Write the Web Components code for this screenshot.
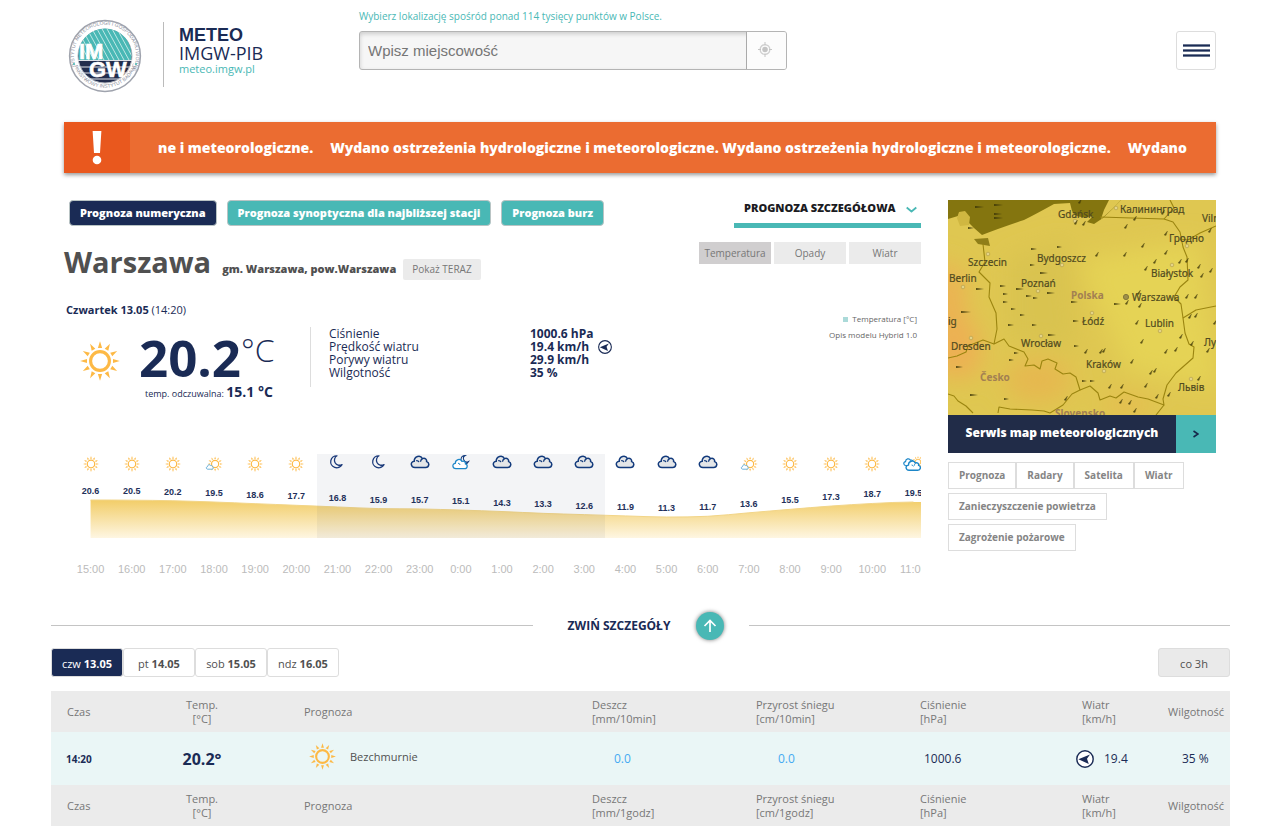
<!DOCTYPE html>
<html lang="pl">
<head>
<meta charset="utf-8">
<title>METEO IMGW-PIB</title>
<style>
  body {
    margin: 0;
    background: #fff;
    color: #1a2b55;
    font-family: "Open Sans", "Noto Sans", sans-serif;
    font-size: 12px;
    --navy: #1a2b55;
    --teal: #49b8b5;
    --grey: #ebebeb;
    --line: #ddd;
  }
  .wrap { padding: 0 67px 0 64px; }
  .columns {
    display: grid;
    grid-template-columns: minmax(0, 1fr) 268px;
    column-gap: 27px;
    padding-top: 27px;
  }
</style>
</head>
<body>
  <div class="wrap">
    <meteo-header></meteo-header>
    <meteo-alert>
      <span>ne i meteorologiczne.</span>
      <span>Wydano ostrzeżenia hydrologiczne i meteorologiczne. Wydano ostrzeżenia hydrologiczne i meteorologiczne.</span>
      <span>Wydano</span>
    </meteo-alert>
    <div class="columns">
      <main>
        <meteo-place>
          <span slot="name">Warszawa</span>
          <span slot="area">gm. Warszawa, pow.Warszawa</span>
        </meteo-place>
        <meteo-chart></meteo-chart>
      </main>
      <meteo-maps>Serwis map meteorologicznych</meteo-maps>
    </div>
  </div>
  <meteo-details></meteo-details>

<script>
(function() {
    function define(name, html, setup) {
        const tmpl = document.createElement("template");
        tmpl.innerHTML = html;
        customElements.define(name, class extends HTMLElement {
            constructor() {
                super();
                this.attachShadow({mode: "open"});
                this.shadowRoot.appendChild(tmpl.content.cloneNode(true));
            }
            connectedCallback() {
                if (setup) setup(this, this.shadowRoot);
            }
        });
    }

    // ---- icons ----
    function rays(cx, cy, r1, r2, w) {
        let out = "";
        for (let a = 0; a < 360; a += 30) {
            out += `<path d="M${cx - w} ${cy - r1}L${cx} ${cy - r2}L${cx + w} ${cy - r1}Z" transform="rotate(${a} ${cx} ${cy})"/>`;
        }
        return out;
    }
    const SUN = `<circle cx="20" cy="20" r="9.4" fill="none" stroke="#fdb945" stroke-width="3.1"/><g fill="#fdb945">${rays(20, 20, 13, 19.8, 2.1)}</g>`;
    const CLOUD = "M5 12.5C.5 12.5 0 6.6 4.2 6.2C4.2 1.2 10.4-.4 12.4 3.6C15.4 2.6 17 4.8 16.6 6.6C20 7.6 19.2 12.5 15.6 12.5Z";
    const MOON = "M7 .8A6 6 0 1 0 12 9.6A5 5 0 0 1 7 .8Z";
    const ICONS = {
        "sun": ["0 0 40 40", SUN],
        "moon": ["-3 -1 20 20", `<path d="${MOON}" fill="none" stroke="#1b3a7a" stroke-width="1.3" stroke-linejoin="round"/>`],
        "cloud": ["0 -1 20 20", `<path d="${CLOUD}" fill="#e4e6e8" stroke="#123a7c" stroke-width="1.5"/><path d="M6.2 5.6Q8.4 5.4 8.9 7.2M12.4 3.8Q10.6 4.6 10.5 6.8" fill="none" stroke="#123a7c" stroke-width="1.3"/>`],
        "cloud-moon": ["0 0 20 20", `<path d="${MOON}" transform="translate(9.5 1) scale(.68)" fill="none" stroke="#123a7c" stroke-width="1.5"/><path d="${CLOUD}" transform="translate(.8 4.4) scale(.82)" fill="#fff" stroke="#1c86c8" stroke-width="1.5"/><path d="M7 9.2Q9 9.4 9 11" fill="none" stroke="#1c86c8"/>`],
        "sun-cloud": ["0 0 20 20", `<g transform="translate(3.5 2.4) scale(.38)">${SUN}</g><path d="${CLOUD}" transform="translate(1.8 10.2) scale(.4)" fill="#fff" stroke="#4a9fd0" stroke-width="2"/>`],
        "clouds-sun": ["0 0 20 20", `<g transform="translate(9 2) scale(.3)">${SUN}</g><path d="${CLOUD}" transform="translate(0 4) scale(.6)" fill="#fff" stroke="#1c86c8" stroke-width="2"/><path d="${CLOUD}" transform="translate(2 6) scale(.82)" fill="#fff" stroke="#1c86c8" stroke-width="1.7"/><path d="M8.6 11Q10 11 10.4 12.4M12.6 9.4Q11.4 10 11.4 11.6" fill="none" stroke="#1c86c8"/>`],
        "wind": ["0 0 18 18", `<circle cx="9" cy="9" r="8.2" fill="#fff" stroke="#1a2b55" stroke-width="1.4"/><path d="M2.4 9.2L14 4.6L11 8.8L12.8 14Z" fill="#1a2b55"/>`],
        "locate": ["0 0 14 15", `<circle cx="7" cy="7.5" r="4.8" fill="none" stroke="#d0d0d0" stroke-width="1.4"/><circle cx="7" cy="7.5" r="2.8" fill="#c4c4c4"/><path d="M7 0V3M7 12V15M0 7.5H3M11 7.5H14" stroke="#c4c4c4"/>`],
        "up": ["0 0 14 14", `<path d="M7 13V2M1.5 7L7 1.5L12.5 7" fill="none" stroke="#fff" stroke-width="1.7"/>`],
        "bars": ["0 0 27 13", `<path d="M0 1.5H27M0 6.5H27M0 11.5H27" stroke="#6c7891" stroke-width="3"/><path d="M0 1.5H27M0 6.5H27M0 11.5H27" stroke="#1a2b55" stroke-width="1"/>`],
        "next": ["0 0 6 8", `<path d="M.5 1L5 4L.5 7" fill="none" stroke="#16284a" stroke-width="1.6"/>`]
    };

    define("meteo-icon", `
    <style>
      :host { display: inline-block; flex: none; width: 20px; height: 20px; }
      svg { display: block; width: 100%; height: 100%; }
    </style>
    <svg aria-hidden="true"></svg>
    `, function(el, root) {
        const icon = ICONS[el.getAttribute("name")];
        const svg = root.querySelector("svg");
        svg.setAttribute("viewBox", icon[0]);
        svg.innerHTML = icon[1];
    });

    // ---- header ----
    define("meteo-logo", `
    <style>
      :host { display: block; width: 74px; height: 74px; }
      svg { display: block; }
      text { font-family: "Liberation Sans", Arial, sans-serif; }
    </style>
    <svg viewBox="0 0 74 74" width="74" height="74" role="img" aria-label="IMGW">
      <defs>
        <clipPath id="top"><path d="M11 41A26.500 26.500 0 1 1 63 41Z"/></clipPath>
        <path id="over" d="M9 50A31 31 0 1 1 65 50"/>
        <path id="under" d="M6 46A32.500 32.500 0 0 0 68 46"/>
      </defs>
      <circle cx="37" cy="37" r="35.400" fill="#fff" stroke="#9fa3ad" stroke-width="1.500"/>
      <circle cx="37" cy="37" r="27" fill="#222d4d" stroke="#b4b8c0"/>
      <path d="M11 41A26.500 26.500 0 1 1 63 41Z" fill="#49b8b5"/>
      <g clip-path="url(#top)" stroke="#bfe7e5" stroke-width="1">
        <path d="M8 8L32 52M13 8L37 52M18 8L42 52M23 8L47 52M28 8L52 52M33 8L57 52M38 8L62 52M43 8L67 52M48 8L72 52M53 8L77 52M3 8L27 52"/>
      </g>
      <path d="M10 41.500H64M12 48H62M14 54H60M21 60H53" stroke="#dfe2e8"/>
      <text x="11" y="40" font-size="22" font-weight="bold" fill="#fff" stroke="#fff" stroke-width=".5">IM</text>
      <text x="21" y="58" font-size="22" font-weight="bold" fill="#fff" stroke="#fff" stroke-width=".5">GW</text>
      <text font-size="5" fill="#8a8e9b"><textPath href="#over" startOffset="3">INSTYTUT METEOROLOGII I GOSPODARKI WODNEJ</textPath></text>
      <text font-size="5" fill="#8a8e9b"><textPath href="#under" startOffset="1">PAŃSTWOWY INSTYTUT BADAWCZY</textPath></text>
      <circle cx="6" cy="45" r="1" fill="#49b8b5"/><circle cx="68" cy="45" r="1" fill="#49b8b5"/>
    </svg>
    `);

    define("meteo-header", `
    <style>
      :host { display: flex; align-items: flex-start; height: 122px; }
      .brand { display: flex; width: 295px; padding: 19px 0 0 4px; box-sizing: border-box; color: inherit; text-decoration: none; }
      .names { margin: 3px 0 0 21px; padding: 4px 0 0 15px; height: 61px; border-left: 1px solid #bbb; font-size: 18px; line-height: 18px; }
      .names b { display: block; font-family: "Liberation Sans", Arial, sans-serif; }
      .names small { display: block; font-size: 11px; line-height: 14px; color: var(--teal); }
      .search { width: 428px; padding-top: 8px; }
      label { display: block; line-height: 16px; margin-bottom: 7px; font-size: 10px; color: var(--teal); white-space: nowrap; }
      .box { display: flex; height: 39px; box-sizing: border-box; border: 1px solid #b4b4b4; border-radius: 3px; box-shadow: inset 0 2px 4px #ccc; background: #f6f6f6; overflow: hidden; }
      input { flex: 1; min-width: 0; border: 0; padding: 0 8px; background: none; font: 15px "Liberation Sans", Arial, sans-serif; color: #666; outline: 0; }
      input::placeholder { color: #757575; }
      .box button { width: 40px; border: 0; border-left: 1px solid #aaa; background: #fcfcfc; padding: 0 4px 0 0; }
      .box meteo-icon { width: 14px; height: 15px; }
      .menu { margin: 31px 0 0 auto; width: 40px; height: 39px; padding: 0; display: grid; place-items: center; border: 1px solid #ddd; border-radius: 3px; background: #fff; }
      .menu meteo-icon { width: 27px; height: 13px; }
    </style>
    <a class="brand" href="#">
      <meteo-logo></meteo-logo>
      <span class="names"><b>METEO</b>IMGW-PIB<small>meteo.imgw.pl</small></span>
    </a>
    <form class="search">
      <label for="city">Wybierz lokalizację spośród ponad 114 tysięcy punktów w Polsce.</label>
      <div class="box">
        <input id="city" type="text" placeholder="Wpisz miejscowość">
        <button type="button" aria-label="Moja lokalizacja"><meteo-icon name="locate"></meteo-icon></button>
      </div>
    </form>
    <button class="menu" aria-label="Menu"><meteo-icon name="bars"></meteo-icon></button>
    `);

    define("meteo-alert", `
    <style>
      :host { display: flex; height: 51px; background: #eb6c31; color: #fff; box-shadow: 0 2px 4px #999; }
      .mark { width: 66px; display: grid; place-items: center; background: #e9581e; }
      .text { flex: 1; min-width: 0; display: flex; align-items: center; gap: 17px; margin: 0 20px 0 28px; overflow: hidden; white-space: nowrap; font-size: 14px; font-weight: 800; }
    </style>
    <div class="mark">
      <svg width="10" height="34" viewBox="0 0 10 34" fill="#fff"><path d="M.6 0H9.400L8 22H2Z"/><circle cx="5" cy="29" r="4.300"/></svg>
    </div>
    <div class="text"><slot></slot></div>
    `);

    // ---- current conditions ----
    define("meteo-place", `
    <style>
      :host { display: block; }
      button { font-family: inherit; border: 0; }
      .row { display: flex; justify-content: space-between; align-items: flex-start; }
      .kinds { display: flex; gap: 10px; padding-left: 5px; }
      .kinds button { height: 26px; padding: 0 10px 2px; border: 1px solid #b9c4c4; border-radius: 4px; background: var(--teal); color: #fff; font-size: 11px; font-weight: 800; white-space: nowrap; }
      .kinds .on { background: var(--navy); }
      .picker { position: relative; width: 187px; }
      select { appearance: none; display: block; width: 100%; height: 28px; padding: 0 0 9px 10px; border: 0; border-bottom: 5px solid var(--teal); border-radius: 0; background: none; color: #1b1b22; font: 800 11px "Open Sans", sans-serif; }
      .picker svg { position: absolute; right: 4px; top: 6px; }
      .place { display: flex; align-items: baseline; padding-top: 16px; color: #505050; font-size: 11px; font-weight: 800; }
      h1 { margin: 0 11px 0 0; font-size: 29px; line-height: 40px; font-weight: 700; }
      .place button { height: 21px; margin-left: 7px; padding: 0 9px; border-radius: 2px; background: var(--grey); color: #777; font-size: 10px; }
      .layers { display: flex; justify-content: flex-end; gap: 3px; margin-top: 14px; }
      .layers button { width: 72px; height: 22px; padding: 0; background: var(--grey); color: #777; font-size: 10px; }
      .layers .on { background: #d0cecf; }
      .side { display: flex; flex-direction: column; align-items: flex-end; }
      .now { margin-top: 20px; }
      .date { padding-left: 2px; line-height: 16px; font-size: 11px; }
      .state { display: flex; margin-top: 9px; }
      .state > meteo-icon { width: 40px; height: 40px; margin: 14px 0 0 16px; }
      .temp { width: 191px; box-sizing: border-box; padding-left: 19px; height: 60px; border-right: 1px solid var(--line); }
      .big { display: flex; align-items: flex-start; font-size: 51px; line-height: 60px; font-weight: 700; white-space: nowrap; }
      .big span { font-size: 32px; line-height: 46px; font-weight: 300; }
      .feels { padding-left: 6px; font-size: 9px; line-height: 10px; white-space: nowrap; }
      .feels b { font-size: 14px; }
      dl { display: grid; grid-template-columns: 201px auto; margin: 0 0 0 18px; line-height: 13px; font-size: 12px; align-content: start; }
      dt, dd { margin: 0; }
      dd { display: flex; height: 13px; align-items: center; font-weight: 700; }
      dd meteo-icon { width: 14px; height: 14px; margin-left: 9px; }
      .legend { margin: 29px 4px 0 0; text-align: right; line-height: 16px; font-size: 8px; color: #666; }
      .legend i { display: inline-block; width: 5px; height: 5px; margin-right: 4px; background: #abdad9; }
    </style>
    <div class="row">
      <div>
        <div class="kinds">
          <button class="on">Prognoza numeryczna</button>
          <button>Prognoza synoptyczna dla najbliższej stacji</button>
          <button>Prognoza burz</button>
        </div>
        <div class="place">
          <h1><slot name="name"></slot></h1>
          <slot name="area"></slot>
          <button>Pokaż TERAZ</button>
        </div>
      </div>
      <div class="side">
        <div class="picker">
          <select aria-label="Rodzaj prognozy"><option>PROGNOZA SZCZEGÓŁOWA</option></select>
          <svg width="11" height="7" viewBox="0 0 11 7"><path d="M.7 1.500L5.500 5.500L10.300 1.500" fill="none" stroke="#49b8b5" stroke-width="1.800" stroke-linejoin="round"/></svg>
        </div>
        <div class="layers">
          <button class="on">Temperatura</button>
          <button>Opady</button>
          <button>Wiatr</button>
        </div>
      </div>
    </div>
    <div class="row">
      <div class="now">
        <div class="date"><b>Czwartek 13.05</b> (14:20)</div>
        <div class="state">
          <meteo-icon name="sun"></meteo-icon>
          <div class="temp">
            <div class="big">20.2<span>°C</span></div>
            <div class="feels">temp. odczuwalna: <b>15.1 °C</b></div>
          </div>
          <dl>
            <dt>Ciśnienie</dt><dd>1000.6 hPa</dd>
            <dt>Prędkość wiatru</dt><dd>19.4 km/h <meteo-icon name="wind"></meteo-icon></dd>
            <dt>Porywy wiatru</dt><dd>29.9 km/h</dd>
            <dt>Wilgotność</dt><dd>35 %</dd>
          </dl>
        </div>
      </div>
      <div class="legend"><i></i>Temperatura [°C]<br>Opis modelu Hybrid 1.0</div>
    </div>
    `);

    // ---- hourly chart ----
    const HOURS = [
        ["15:00", 20.6, "sun"], ["16:00", 20.5, "sun"], ["17:00", 20.2, "sun"], ["18:00", 19.5, "sun-cloud"],
        ["19:00", 18.6, "sun"], ["20:00", 17.7, "sun"], ["21:00", 16.8, "moon"], ["22:00", 15.9, "moon"],
        ["23:00", 15.7, "cloud"], ["0:00", 15.1, "cloud-moon"], ["1:00", 14.3, "cloud"], ["2:00", 13.3, "cloud"],
        ["3:00", 12.6, "cloud"], ["4:00", 11.9, "cloud"], ["5:00", 11.3, "cloud"], ["6:00", 11.7, "cloud"],
        ["7:00", 13.6, "sun-cloud"], ["8:00", 15.5, "sun"], ["9:00", 17.3, "sun"], ["10:00", 18.7, "sun"],
        ["11:00", 19.5, "clouds-sun"]
    ];
    const drop = t => (20.6 - t) * 1.83;

    define("meteo-chart", `
    <style>
      :host { display: block; overflow: hidden; padding-left: 6px; margin-top: 67px; }
      .strip { display: grid; grid-template-columns: repeat(21, minmax(0, 1fr)); margin-right: -13px; }
      svg { grid-area: 1 / 1 / 2 / 22; width: 100%; height: 84px; }
      .hour { grid-row: 1; z-index: 1; height: 84px; text-align: center; font: bold 9px/12px "Liberation Sans", Arial, sans-serif; color: #23305a; }
      .night { background: rgba(26, 43, 85, .05); }
      meteo-icon { display: block; margin: 0 auto 11px; }
      meteo-icon[name="sun"] { width: 16px; border: 2px solid transparent; height: 16px; }
      .time { grid-row: 2; margin-top: 24px; justify-self: center; font: 11px/14px "Liberation Sans", Arial, sans-serif; color: #bbb; }
    </style>
    <div class="strip">
      <svg viewBox="0 0 2100 84" preserveAspectRatio="none">
        <defs><linearGradient id="fill" x1="0" y1="46" x2="0" y2="84" gradientUnits="userSpaceOnUse">
          <stop offset="0" stop-color="#f2cd68"/><stop offset="1" stop-color="#fef6e2"/>
        </linearGradient></defs>
        <path id="area" fill="url(#fill)"/>
        <path id="edge" fill="none" stroke="#f2d588" stroke-width="1" vector-effect="non-scaling-stroke"/>
      </svg>
    </div>
    `, function(el, root) {
        const strip = root.querySelector(".strip");
        const ys = HOURS.map(h => 46 + drop(h[1]));
        // slope at each hour, so the curve passes smoothly through its neighbours
        const slope = i => i && i < ys.length - 1 ? (ys[i + 1] - ys[i - 1]) / 2 : 0;
        let line = `M50 ${ys[0]}`;
        HOURS.forEach(function(h, i) {
            const x = 50 + i * 100;
            if (i) {
                line += `C${x - 67} ${ys[i - 1] + slope(i - 1) / 3} ${x - 33} ${ys[i] - slope(i) / 3} ${x} ${ys[i]}`;
            }
            const night = i > 5 && i < 13 ? " night" : "";
            const col = i + 1;
            strip.insertAdjacentHTML("beforeend",
                `<div class="hour${night}" style="grid-column:${col}"><meteo-icon name="${h[2]}"></meteo-icon><div style="padding-top:${Math.round(drop(h[1]))}px">${h[1]}</div></div>
                 <div class="time" style="grid-column:${col}">${h[0]}</div>`);
        });
        root.getElementById("edge").setAttribute("d", line);
        root.getElementById("area").setAttribute("d", line + "H2100V84H50Z");
    });

    // ---- map card ----
    const CITIES = [
        [110, 18, "Gdańsk"], [172, 13, "Калининград"], [254, 22, "Viln"], [221, 42, "Гродно"], [20, 66, "Szczecin"],
        [89, 62, "Bydgoszcz"], [1, 82, "Berlin"], [73, 87, "Poznań"], [203, 77, "Białystok"], [184, 101, "Warszawa"],
        [0, 125, "ig"], [134, 125, "Łódź"], [197, 127, "Lublin"], [3, 150, "Dresden"], [73, 147, "Wrocław"],
        [256, 146, "Лу"], [138, 168, "Kraków"], [230, 191, "Львів"]
    ];
    const DOTS = [[40, 54], [114, 65], [90, 91], [144, 113], [93, 136], [156, 171], [224, 65], [239, 46], [212, 131], [23, 138], [127, 21], [168, 8], [243, 179], [15, 87]];
    const WIND = [
        [27, 7, 9], [46, 14, 8], [46, 18, 9], [46, 5, 9], [20, 28, 6], [83, 49, 6], [109, 47, 5], [92, 73, 8], [82, 65, 5],
        [28, 89, 8], [52, 86, 6], [68, 89, 8], [78, 96, 6], [85, 98, 5], [99, 93, 8], [55, 94, 5], [55, 102, 5], [63, 109, 5],
        [13, 112, 10], [60, 125, 6], [84, 125, 5], [100, 135, 8], [123, 102, 7], [125, 121, 6], [126, 146, 5], [166, 104, 7],
        [8, 167, 7], [61, 160, 5], [66, 153, 5], [22, 195, 8], [56, 199, 5], [134, 181, 5], [142, 181, 5], [72, 115, 5]
    ];
    const GUSTS = [
        [127, 24], [135, 25], [148, 56], [177, 28], [186, 20], [217, 35], [217, 54], [194, 47], [176, 56], [197, 70], [206, 63],
        [231, 63], [238, 62], [250, 68], [253, 77], [262, 72], [261, 32], [178, 104], [191, 107], [190, 94], [188, 124], [193, 143],
        [152, 153], [137, 153], [183, 163], [232, 138], [217, 153], [227, 151], [243, 145], [206, 172], [202, 174], [220, 196],
        [197, 187], [173, 188], [161, 188], [181, 204], [186, 212], [172, 203], [208, 198], [247, 117], [241, 118], [266, 124], [214, 14],
        [131, 3], [238, 98], [247, 98], [259, 152], [250, 180], [117, 200], [155, 152]
    ];

    define("meteo-maps", `
    <style>
      :host { display: block; }
      .map { display: block; width: 100%; height: 215px; }
      .map text { font: 10px "Noto Sans", "Open Sans", sans-serif; fill: #504a20; stroke: #504a20; stroke-width: .2px; }
      .map .land { font-weight: 700; fill: #a28052; stroke: none; }
      .bar { display: flex; height: 38px; background: #212c48; color: #fff; font-size: 12px; font-weight: 800; text-decoration: none; }
      .bar span { flex: 1; text-align: center; line-height: 35px; }
      .bar div { width: 40px; display: grid; place-items: center; background: var(--teal); }
      .bar meteo-icon { width: 6px; height: 8px; }
      nav { display: flex; flex-wrap: wrap; row-gap: 4px; margin-top: 9px; }
      nav a { padding: 0 10px; line-height: 25px; border: 1px solid var(--line); font-size: 10px; font-weight: 700; color: #858585; text-decoration: none; }
    </style>
    <svg class="map" viewBox="0 0 268 215" preserveAspectRatio="xMidYMid slice">
      <defs><filter id="soft" x="-50%" y="-50%" width="200%" height="200%"><feGaussianBlur stdDeviation="12"/></filter></defs>
      <rect width="268" height="215" fill="#dfc751"/>
      <g filter="url(#soft)">
        <path d="M-10 60Q26 70 14 110Q50 150 20 180L-20 170Z" fill="#edb052"/>
        <ellipse cx="90" cy="180" rx="34" ry="22" fill="#e6b850"/>
        <ellipse cx="180" cy="205" rx="26" ry="10" fill="#e6bb50"/>
        <path d="M130 60L250 40L270 190L180 170Z" fill="#e5d355"/>
        <path d="M60 60L120 40L130 150L60 140Z" fill="#d9c34f"/>
      </g>
      <path d="M0 0H173Q165 9 155 18L146 24L139 22L145 16Q128 20 124 11L122 3L106 4Q88 14 76 20Q52 28 34 35L26 28L18 20L10 16L0 19Z" fill="#84750f"/>
      <path d="M173 0Q165 9 153 19L156 10L161 0Z" fill="#dfc751"/>
      <path d="M9 18L11 12L17 11L22 17L21 25L12 26Z" fill="#d0b741"/>
      <path d="M26 39L40 38L42 46L30 44Z" fill="#8f7e18"/>
      <g fill="none" stroke="#9b8510" stroke-width="1.100" stroke-linejoin="round">
        <path d="M35 44L37 62L31 72L42 83L41 97L48 113L49 129L46 144L56 139L61 146L76 152L80 159L77 166L86 165L92 169L94 161L100 159L109 163L107 169L115 174L122 173L128 177L132 190L124 194L115 205L102 213"/>
        <path d="M0 158L9 156L18 152L20 146L35 140L46 144"/>
        <path d="M0 194L6 196L10 201L18 206L25 213M50 213L51 207L62 209L84 210L96 211L102 213"/>
        <path d="M132 190L142 186L150 193L152 200L162 196L168 198L176 192L190 197L200 199L216 205L215 199L219 185L228 173L245 158L246 147L241 144L237 133L235 118L233 104L226 97L232 87L240 80L239 57L235 47L232 32L225 22L216 19L152 17"/>
        <path d="M216 205L208 215M235 118L248 110L268 106M216 19L226 8L222 0M268 26L252 33L240 40L232 39"/>
      </g>
      <g id="wind"></g>
      <text class="land" x="123" y="99">Polska</text>
      <text class="land" x="32" y="181">Česko</text>
      <text class="land" x="107" y="217">Slovensko</text>
    </svg>
    <a class="bar" href="#"><span><slot></slot></span><div><meteo-icon name="next"></meteo-icon></div></a>
    <nav>
      <a href="#">Prognoza</a><a href="#">Radary</a><a href="#">Satelita</a><a href="#">Wiatr</a>
      <a href="#">Zanieczyszczenie powietrza</a><a href="#">Zagrożenie pożarowe</a>
    </nav>
    `, function(el, root) {
        let out = DOTS.map(d => `<circle cx="${d[0]}" cy="${d[1]}" r="1.8" fill="#e4d487" stroke="#b09a48" stroke-width=".6"/>`).join("");
        out += `<circle cx="178" cy="97" r="2.6" fill="#9d8f4a" stroke="#857838"/>`;
        out += CITIES.map(c => `<text x="${c[0]}" y="${c[1]}">${c[2]}</text>`).join("");
        out += WIND.map(w => `<path d="M${w[0]} ${w[1] - 1}L${w[0] + w[2]} ${w[1]}L${w[0]} ${w[1] + 1}Z" fill="#3c3608" opacity=".85"/>`).join("");
        out += GUSTS.map(w => `<path d="M${w[0] - 1} ${w[1]}l3.500-4l-1.500 4.500Z" fill="#3c3608" stroke="#3c3608" stroke-width=".3" opacity=".8"/>`).join("");
        root.getElementById("wind").innerHTML = out;
    });

    // ---- details ----
    function head(step) {
        return `<tr class="head">
          <th>Czas</th><th class="mid">Temp.<br>[°C]</th><th class="sky">Prognoza</th><th>Deszcz<br>[mm/${step}]</th>
          <th>Przyrost śniegu<br>[cm/${step}]</th><th>Ciśnienie<br>[hPa]</th><th>Wiatr<br>[km/h]</th><th class="last">Wilgotność</th>
        </tr>`;
    }

    define("meteo-details", `
    <style>
      :host { display: block; padding: 35px 53px 8px 51px; }
      .toggle { display: flex; align-items: center; }
      hr { flex: 1; margin: 0; border: 0; border-top: 1px solid #c4c4c4; }
      .toggle button { display: flex; align-items: center; justify-content: center; gap: 26px; width: 216px; height: 29px; padding: 0 8px 0 19px; border: 0; background: none; font: 700 12px "Open Sans", sans-serif; color: var(--navy); white-space: nowrap; }
      .toggle i { display: grid; place-items: center; width: 28px; height: 28px; border-radius: 50%; background: var(--teal); box-shadow: 0 0 4px #777; }
      .toggle meteo-icon { width: 14px; height: 14px; }
      .days { display: flex; margin: 8px 0 14px; }
      .days button { width: 72px; height: 29px; padding: 2px 0 0; border: 1px solid var(--line); border-radius: 3px; background: #fff; font: 11px "Open Sans", sans-serif; color: #505050; }
      .days .on { background: var(--navy); color: #fff; }
      .days .step { margin-left: auto; background: #eaeaea; }
      table { width: 100%; table-layout: fixed; border-collapse: collapse; }
      th, td { padding: 0 0 0 16px; text-align: left; font-weight: 400; white-space: nowrap; }
      .head { height: 41px; background: var(--grey); color: #777; font-size: 11px; line-height: 14px; }
      .now { height: 53px; background: #eaf6f6; font-size: 12px; }
      .mid { padding: 0; text-align: center; }
      .now .mid { font-size: 16px; font-weight: 700; }
      .sky { padding-left: 40px; }
      .last { padding-left: 8px; }
      .now .hour { padding-left: 15px; font-size: 10px; font-weight: 700; }
      .rain { padding-left: 38px; color: #45aaf2; }
      .press { padding-left: 20px; }
      .wind { padding-left: 10px; }
      .hum { padding-left: 22px; }
      .pair { display: flex; align-items: center; gap: 10px; }
      .sky .pair { gap: 14px; margin: 0 0 4px 5px; font-size: 11px; color: #505050; }
      .sky meteo-icon { width: 27px; height: 27px; }
      .wind meteo-icon { width: 18px; height: 18px; }
    </style>
    <div class="toggle">
      <hr>
      <button>ZWIŃ SZCZEGÓŁY <i><meteo-icon name="up"></meteo-icon></i></button>
      <hr>
    </div>
    <div class="days">
      <button class="on">czw <b>13.05</b></button>
      <button>pt <b>14.05</b></button>
      <button>sob <b>15.05</b></button>
      <button>ndz <b>16.05</b></button>
      <button class="step">co 3h</button>
    </div>
    <table>
      <colgroup>
        <col style="width:89px"><col style="width:124px"><col><col style="width:164px">
        <col style="width:164px"><col style="width:162px"><col style="width:94px"><col style="width:70px">
      </colgroup>
      ${head("10min")}
      <tr class="now">
        <td class="hour">14:20</td>
        <td class="mid">20.2°</td>
        <td class="sky"><div class="pair"><meteo-icon name="sun"></meteo-icon>Bezchmurnie</div></td>
        <td class="rain">0.0</td>
        <td class="rain">0.0</td>
        <td class="press">1000.6</td>
        <td class="wind"><div class="pair"><meteo-icon name="wind"></meteo-icon>19.4</div></td>
        <td class="hum">35 %</td>
      </tr>
      ${head("1godz")}
    </table>
    `);
})();
</script>
</body>
</html>
